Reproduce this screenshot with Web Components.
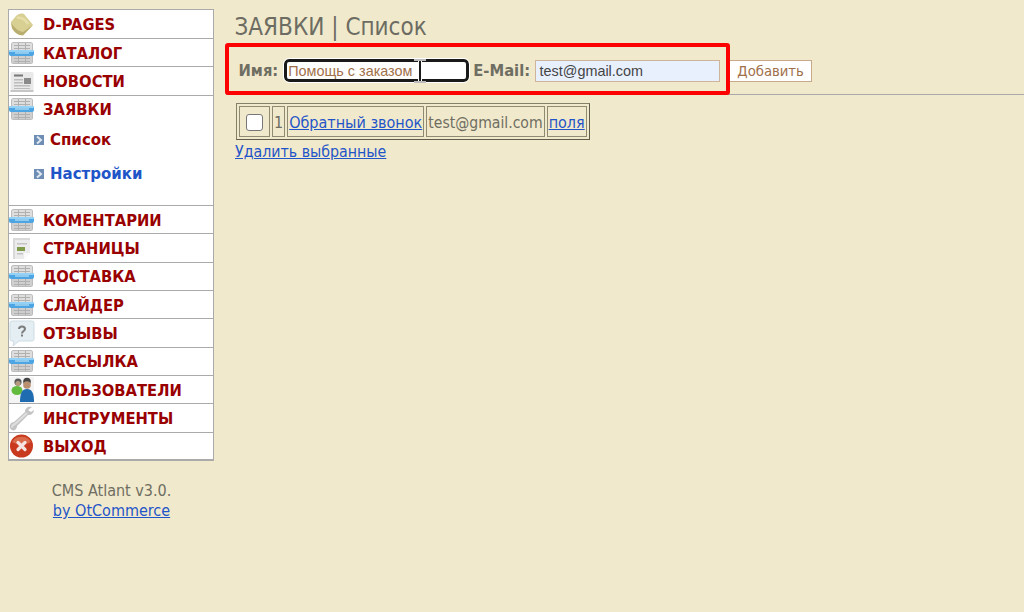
<!DOCTYPE html>
<html lang="ru"><head><meta charset="utf-8"><title>CMS</title>
<style>
html,body{margin:0;height:100%;background:#f1e9cc;overflow:hidden}
body{font-family:"DejaVu Sans Condensed","DejaVu Sans",sans-serif;}
</style></head>
<body>
<app-shell>
  <side-bar slot="side">
    <menu-item icon="book">D-PAGES</menu-item>
    <menu-item icon="grid">КАТАЛОГ</menu-item>
    <menu-item icon="news">НОВОСТИ</menu-item>
    <menu-item icon="grid" open>ЗАЯВКИ
      <sub-item slot="sub" active>Список</sub-item>
      <sub-item slot="sub">Настройки</sub-item>
    </menu-item>
    <menu-item icon="grid">КОМЕНТАРИИ</menu-item>
    <menu-item icon="page">СТРАНИЦЫ</menu-item>
    <menu-item icon="grid">ДОСТАВКА</menu-item>
    <menu-item icon="grid">СЛАЙДЕР</menu-item>
    <menu-item icon="help">ОТЗЫВЫ</menu-item>
    <menu-item icon="grid">РАССЫЛКА</menu-item>
    <menu-item icon="users">ПОЛЬЗОВАТЕЛИ</menu-item>
    <menu-item icon="wrench">ИНСТРУМЕНТЫ</menu-item>
    <menu-item icon="exit" last>ВЫХОД</menu-item>
  </side-bar>
  <order-form></order-form>
  <order-table></order-table>
</app-shell>
<script>
const ICONS={
book:`<path d="M2 11 7 5C9 3 12 2 15 3L24 14 14 24C9 24 5 21 3 17z" fill="#d8cf92"/><path d="M2 11C4 16 9 20 14 21L24 14 14 24.500C9 24.500 5 21 3 17z" fill="#b9ae70"/><path d="M8 7c4-1 8 1 11 6" stroke="#e6dfab" stroke-width="2.500" fill="none"/>`,
grid:`<rect x="2" y="2" width="22" height="22" rx="2.500" fill="#bcbcbc"/><rect x="3" y="3" width="20" height="7" rx="1" fill="#dedede"/><rect x="3" y="16" width="20" height="7" rx="1" fill="#cfcfcf"/><g fill="#b0b0b0"><rect x="5" y="5" width="16" height="1"/><rect x="5" y="8" width="16" height="1"/><rect x="5" y="18" width="16" height="1"/><rect x="5" y="21" width="16" height="1"/><rect x="9" y="3" width="1" height="7"/><rect x="16" y="3" width="1" height="7"/><rect x="9" y="16" width="1" height="7"/><rect x="16" y="16" width="1" height="7"/></g><rect x="0" y="10" width="25" height="6" rx="2" fill="#4da6e3"/><rect x="0" y="10" width="25" height="2" rx="1" fill="#93d2f6"/><rect x="6" y="12.500" width="14" height="1" fill="#d3ecfa"/>`,
news:`<rect x="1.500" y="4" width="23" height="19" rx="1.500" fill="#e9e9e9"/><rect x="1.500" y="22" width="23" height="2" fill="#c6c6c6"/><rect x="5" y="6.500" width="9" height="2" fill="#777"/><g fill="#bcbcbc"><rect x="5" y="11" width="9" height="1.500"/><rect x="5" y="14" width="9" height="1.500"/><rect x="5" y="17" width="16" height="1.500"/><rect x="5" y="20" width="16" height="1"/></g><rect x="15" y="10" width="7" height="6" fill="#8a8a8a"/>`,
page:`<path d="M4 3h17v15l-6 6H4z" fill="#ececec"/><path d="M21 18l-6 6v-6z" fill="#fafafa"/><path d="M4 3h17v2H6v19H4z" fill="#d9d9d9"/><rect x="8" y="12" width="8" height="4" fill="#7f9c4c"/><g fill="#c4c4c4"><rect x="8" y="8" width="10" height="1.500"/><rect x="8" y="18" width="6" height="1.500"/></g>`,
help:`<path d="M3 1h20a2 2 0 0 1 2 2v16a2 2 0 0 1-2 2H10l-6 5 1-5H3a2 2 0 0 1-2-2V3a2 2 0 0 1 2-2z" fill="#e4eef3" stroke="#cfdde5"/><path d="M10 9c0-3.500 6-3.500 6 0 0 2-3 2-3 4.500" fill="none" stroke="#7d7d7d" stroke-width="2"/><rect x="12" y="14.500" width="2" height="2" fill="#7d7d7d"/>`,
users:`<rect x="0" y="0" width="25" height="26" fill="#f4f4f4"/><circle cx="9" cy="5" r="3.600" fill="#5a5a5a"/><circle cx="18" cy="4.500" r="3.800" fill="#444"/><circle cx="9" cy="6.500" r="2.600" fill="#b59a80"/><ellipse cx="8" cy="13.500" rx="5.500" ry="4.500" fill="#63bb3d"/><circle cx="18" cy="8" r="3.800" fill="#b98f70"/><path d="M11 25c0-9 2-13 7-13s7 4 7 13z" fill="#1f6cb0"/>`,
wrench:`<path d="M23 2c-4-1-7 1-7 5L5 17c-3 0-5 3-4 6s5 3 6 1c1-1 1-3 1-3L19 10c3 .5 6-2 6-5l-3 2-3-2z" fill="#c3c3c3"/><path d="M18 8 6 19c-2 .5-3 2-3 3.500" stroke="#dedede" stroke-width="2" fill="none"/>`,
exit:`<circle cx="12.500" cy="13" r="11.500" fill="#c8391d"/><path d="M3 9a10.500 9 0 0 1 19 0c-5 3-14 3-19 0z" fill="#d96a4a"/><path d="M9 9.500 16 16.500M16 9.500 9 16.500" stroke="#f6e4e0" stroke-width="3.200" stroke-linecap="round"/>`
};
function def(name,html,init){customElements.define(name,class extends HTMLElement{
  constructor(){super();this.attachShadow({mode:'open'}).innerHTML=html;}
  connectedCallback(){init&&init.call(this,this.shadowRoot)}
});}
def('app-shell',`<style>:host{display:flex;height:612px;box-sizing:border-box}
.col{width:216px;flex:none}.m{flex:1;min-width:0;padding-left:10px}
h1{margin:14px 0 0 8.500px;font:400 24px/27px "DejaVu Sans Condensed","DejaVu Sans",sans-serif;color:#6c6c62}
footer{margin-top:20px;text-align:center;color:#6e6e62;font-size:16px;line-height:20px;padding-left:7px}
a{color:#1f55c8}</style>
<div class="col"><slot name="side"></slot><footer>CMS Atlant v3.0.<br><a href="#">by OtCommerce</a></footer></div>
<div class="m"><h1>ЗАЯВКИ | Список</h1><slot></slot></div>`);
def('side-bar',`<style>:host{display:block;margin:9px 0 0 8px;width:206px;box-sizing:border-box;background:#fff;border:1px solid #aaa;border-bottom-width:2px;padding-top:.67px}</style><slot></slot>`);
def('menu-item',`<style>:host{display:block;border-bottom:1px solid #aaa;box-sizing:border-box}
:host([last]){border-bottom:0}
.r{display:flex;align-items:center;height:27.330px;color:#990000;font-weight:700;font-size:16.400px;}
:host([last]) .r{height:26.600px}
.i{width:26px;height:26px;margin-right:8px;flex:none;display:block;filter:blur(.45px)}
.t{position:relative;top:.5px}
.s{display:none}:host([open]) .s{display:block;height:82px}
</style><div class="r"><svg class="i" viewBox="0 0 26 26"></svg><span class="t"><slot></slot></span></div><div class="s"><slot name="sub"></slot></div>`,
function(s){s.querySelector('svg').innerHTML=ICONS[this.getAttribute('icon')]});
def('sub-item',`<style>:host{display:flex;align-items:center;height:34px;padding-left:25px;color:#1f55c8;font:700 15px "DejaVu Sans",sans-serif}
:host([active]){color:#990000}
svg{width:10px;height:10px;margin-right:6px;flex:none}</style>
<svg viewBox="0 0 10 10"><rect width="10" height="10" fill="#6d8db5"/><path d="M3 1.500 7 5 3 8.500" fill="none" stroke="#dfe7ef" stroke-width="2"/></svg><slot></slot>`);
def('order-form',`<style>:host{display:flex;align-items:center;position:relative;height:52px;margin-top:2px;box-sizing:border-box;border-bottom:1px solid #a9a9a9;padding:4px 0 0 12.500px;color:#6e6e62;font-weight:700;font-size:16.400px}
label{margin-right:5px}
label.n{margin-right:6px}
.in{box-sizing:border-box;width:185px;height:22px;padding:0 3px;font:14.400px/20px "Liberation Sans",sans-serif;border:1px solid #c8a98a;background:#fff;color:#a0704a;display:flex;align-items:center}
.f{border:3px solid #1a1a1a;border-radius:5px;height:23px;outline:1px solid #fff;padding:0 1px;margin-right:4px;white-space:nowrap}
.e{background:#e8f0fe;color:#444;margin-right:9px;border-width:1.500px;border-color:#cdb49a;padding:0 3.500px}
button{box-sizing:border-box;width:83px;height:22px;background:#fff;border:1px solid #c8a98a;color:#a0704a;font:14.700px "DejaVu Sans Condensed","DejaVu Sans",sans-serif;padding:0}
.red{position:absolute;left:-1px;top:0;width:505px;height:52px;box-sizing:border-box;border:4px solid #fe0000;border-radius:3px;pointer-events:none}
.cur{position:absolute;left:193px;top:17px;width:2px;height:22px;background:#1a1a1a;box-shadow:-1px 0 0 #fff,1px 0 0 #fff}
.cur:before,.cur:after{content:"";position:absolute;left:-5px;width:12px;height:2px;background:#bbb}.cur:before{top:-1px}.cur:after{bottom:-1px}
</style>
<label class="n">Имя:</label><div class="in f">Помощь с заказом</div><label>E-Mail:</label><div class="in e">test@gmail.com</div><button>Добавить</button>
<div class="red"></div><div class="cur"></div>`);
def('order-table',`<style>:host{display:block;margin:8px 0 0 10px;color:#6e6e62;font-size:16px}
table{border:1px solid #85806a;border-right-color:#5f5c4c;border-bottom-color:#5f5c4c;border-spacing:2px;border-collapse:separate}
td{border:1px solid #8f8a72;padding:2px 1px 0;height:27px;line-height:20px;white-space:nowrap}
a{color:#1f55c8}
.c{width:27px;text-align:center;padding:1px}
.m{font-size:15.600px}
.b{display:inline-block;width:17px;height:17px;box-sizing:border-box;border:1px solid #777;border-radius:3px;background:#fff;vertical-align:middle}
.t{display:block;margin:2px 0 0 -1px;line-height:20px;font-size:15.800px}</style>
<table><tr><td class="c"><span class="b"></span></td><td>1</td><td><a href="#">Обратный звонок</a></td><td class="m">test@gmail.com</td><td><a href="#">поля</a></td></tr></table>
<a class="t" href="#">Удалить выбранные</a>`);
</script>
</body></html>
